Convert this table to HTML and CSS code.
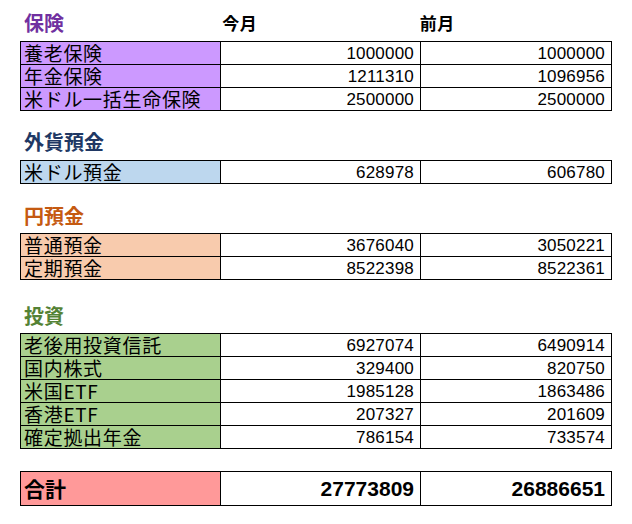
FILE: index.html
```html
<!DOCTYPE html>
<html lang="ja">
<head>
<meta charset="utf-8">
<title>資産一覧</title>
<link rel="stylesheet" href="styles.css">
</head>
<body>
<div class="sheet">
  <div class="head head-first">
    <div class="title title-ins">保険</div>
    <div class="colhead">今月</div>
    <div class="colhead">前月</div>
  </div>
  <div class="grid">
    <div class="label fill-ins">養老保険</div><div class="num">1000000</div><div class="num">1000000</div>
    <div class="label fill-ins">年金保険</div><div class="num">1211310</div><div class="num">1096956</div>
    <div class="label fill-ins">米ドル一括生命保険</div><div class="num">2500000</div><div class="num">2500000</div>
  </div>

  <div class="head head-fx">
    <div class="title title-fx">外貨預金</div>
  </div>
  <div class="grid">
    <div class="label fill-fx">米ドル預金</div><div class="num">628978</div><div class="num">606780</div>
  </div>

  <div class="head head-yen">
    <div class="title title-yen">円預金</div>
  </div>
  <div class="grid">
    <div class="label fill-yen">普通預金</div><div class="num">3676040</div><div class="num">3050221</div>
    <div class="label fill-yen">定期預金</div><div class="num">8522398</div><div class="num">8522361</div>
  </div>

  <div class="head head-inv">
    <div class="title title-inv">投資</div>
  </div>
  <div class="grid">
    <div class="label fill-inv">老後用投資信託</div><div class="num">6927074</div><div class="num">6490914</div>
    <div class="label fill-inv">国内株式</div><div class="num">329400</div><div class="num">820750</div>
    <div class="label fill-inv">米国ETF</div><div class="num">1985128</div><div class="num">1863486</div>
    <div class="label fill-inv">香港ETF</div><div class="num">207327</div><div class="num">201609</div>
    <div class="label fill-inv">確定拠出年金</div><div class="num">786154</div><div class="num">733574</div>
  </div>

  <div class="grid grid-total">
    <div class="label total-label">合計</div><div class="num total-num">27773809</div><div class="num total-num">26886651</div>
  </div>
</div>
</body>
</html>
```

FILE: styles.css
```css
html, body {
  margin: 0;
  padding: 0;
  background: #ffffff;
}

.sheet {
  padding-left: 20px;
  width: 592px;
  font-family: "Noto Sans CJK JP", "Liberation Sans", sans-serif;
  color: #000000;
}

.head {
  display: flex;
  align-items: flex-end;
  height: 20px;
  margin-bottom: 8px;
}

.head-first { margin-top: 13px; }
.head-fx { margin-top: 21px; }
.head-yen { margin-top: 22px; margin-bottom: 7px; }
.head-inv { margin-top: 26px; margin-bottom: 7px; }

.title {
  width: 200px;
  padding-left: 4px;
  box-sizing: border-box;
  font-size: 20px;
  line-height: 20px;
  font-weight: 700;
}

.title-ins { color: #7030a0; }
.title-fx { color: #203864; }
.title-yen { color: #c55a11; }
.title-inv { color: #548235; }

.colhead {
  width: 200px;
  padding-left: 5px;
  box-sizing: border-box;
  font-size: 17px;
  letter-spacing: 0.5px;
  line-height: 18px;
  font-weight: 700;
  margin-bottom: 1px;
}

.grid {
  display: grid;
  grid-template-columns: 199px 199px 190px;
  grid-auto-rows: 22px;
  gap: 1px;
  padding: 1px;
  background: #000000;
}

.label {
  padding-left: 3px;
  font-size: 19px;
  letter-spacing: 0.7px;
  line-height: 22px;
  white-space: nowrap;
}

.num {
  background: #ffffff;
  text-align: right;
  padding-right: 6px;
  padding-top: 1px;
  font-family: "Liberation Sans", sans-serif;
  font-size: 17px;
  letter-spacing: 0.2px;
  line-height: 21px;
}

.fill-ins { background: #cc99ff; }
.fill-fx { background: #bdd7ee; }
.fill-yen { background: #f8cbad; }
.fill-inv { background: #a9d08e; }

.grid-total {
  margin-top: 22px;
  grid-auto-rows: 33px;
}

.total-label {
  background: #ff9999;
  font-size: 21px;
  font-weight: 700;
  line-height: 33px;
  letter-spacing: 0;
}

.total-num {
  font-size: 21px;
  font-weight: 700;
  letter-spacing: 0;
  line-height: 32px;
}
```
